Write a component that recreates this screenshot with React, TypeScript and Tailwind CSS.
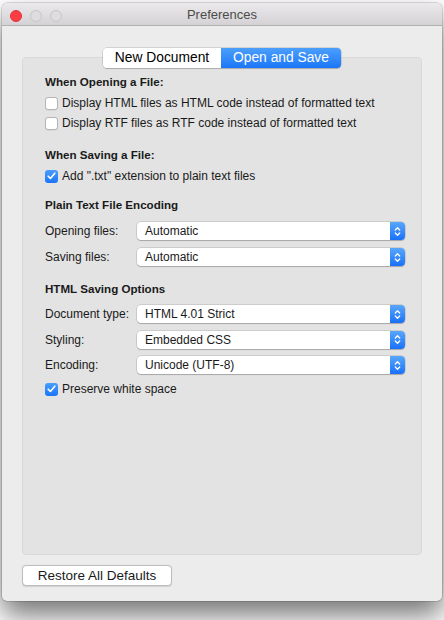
import type { ReactNode } from 'react'

const font = { fontFamily: '"Liberation Sans", Arial, sans-serif' }

function Checkbox({ checked }: { checked?: boolean }) {
  if (checked) {
    return (
      <span className="flex h-[13px] w-[13px] shrink-0 items-center justify-center rounded-[3px] bg-gradient-to-b from-[#4a9dfb] to-[#1a74f8]">
        <svg width="9" height="8" viewBox="0 0 9 8" fill="none">
          <path d="M1.2 4.2 L3.4 6.4 L7.8 1.2" stroke="white" strokeWidth="1.6" strokeLinecap="round" strokeLinejoin="round" />
        </svg>
      </span>
    )
  }
  return (
    <span className="h-[13px] w-[13px] shrink-0 rounded-[3px] border border-[#b4b4b4] bg-white shadow-[0_0.5px_0.5px_rgba(0,0,0,0.1)]" />
  )
}

function CheckRow({ checked, children }: { checked?: boolean; children: ReactNode }) {
  return (
    <div className="flex h-[20px] items-center gap-[4px]">
      <Checkbox checked={checked} />
      <span>{children}</span>
    </div>
  )
}

function Heading({ children }: { children: ReactNode }) {
  return <div className="h-[16px] text-[11.6px] font-bold leading-[16px]">{children}</div>
}

function Select({ label, value }: { label: string; value: string }) {
  return (
    <div className="flex h-[18px] items-center">
      <span className="w-[92px]">{label}</span>
      <div className="flex h-[18px] w-[268px] rounded-[4px] bg-white shadow-[0_0_0_0.5px_rgba(0,0,0,0.2),0_1px_1px_rgba(0,0,0,0.18)]">
        <span className="flex-1 pl-[8px] leading-[18px]">{value}</span>
        <span className="flex w-[15px] items-center justify-center rounded-r-[4px] bg-gradient-to-b from-[#58a6fb] to-[#1870f8]">
          <svg width="7" height="11" viewBox="0 0 7 11" fill="none">
            <path d="M1.3 4 L3.5 1.8 L5.7 4" stroke="white" strokeWidth="1.3" strokeLinecap="round" strokeLinejoin="round" />
            <path d="M1.3 7 L3.5 9.2 L5.7 7" stroke="white" strokeWidth="1.3" strokeLinecap="round" strokeLinejoin="round" />
          </svg>
        </span>
      </div>
    </div>
  )
}

export default function App() {
  return (
    <div className="h-[620px] w-[444px] overflow-hidden bg-white px-[2px] pt-[3px]" style={font}>
      <div className="flex h-[598px] flex-col overflow-hidden rounded-[5px] bg-[#ececec] text-[12px] text-[#1a1a1a] shadow-[0_14px_28px_rgba(0,0,0,0.55),0_0_0_0.5px_rgba(0,0,0,0.25)]">
        {/* title bar */}
        <div className="relative flex h-[23px] shrink-0 items-center justify-center border-b border-[#b1b1b1] bg-gradient-to-b from-[#ebe9eb] to-[#d4d2d4]">
          <div className="absolute left-[8px] top-[7px] flex gap-[8px]">
            <span className="h-[12px] w-[12px] rounded-full border border-[#e0343a] bg-[#fc3d44]" />
            <span className="h-[12px] w-[12px] rounded-full border border-[#c6c6c6] bg-[#dedcde]" />
            <span className="h-[12px] w-[12px] rounded-full border border-[#c6c6c6] bg-[#dedcde]" />
          </div>
          <span className="pt-[1px] text-[13px] text-[#4b4b4b]">Preferences</span>
        </div>

        {/* body */}
        <div className="flex flex-1 flex-col px-[20px] pt-[22px]">
          <div className="relative z-10 flex justify-center">
            <div className="flex h-[20px] overflow-hidden rounded-[4px] text-[13.8px] shadow-[0_0_0_0.5px_rgba(0,0,0,0.22),0_1px_1px_rgba(0,0,0,0.15)]">
              <span className="flex w-[118px] items-center justify-center bg-white leading-[20px] text-black">New Document</span>
              <span className="flex w-[120px] items-center justify-center bg-gradient-to-b from-[#4b9ffb] to-[#1a76f9] leading-[20px] text-white">Open and Save</span>
            </div>
          </div>

          <div className="-mt-[11px] flex h-[498px] flex-col rounded-[4px] border border-[#d9d9d9] bg-[#e3e3e3] pl-[22px] pr-[15px] pt-[16px] leading-[18px]">
            <Heading>When Opening a File:</Heading>
            <div className="mt-[3px]">
              <CheckRow>Display HTML files as HTML code instead of formatted text</CheckRow>
              <CheckRow>Display RTF files as RTF code instead of formatted text</CheckRow>
            </div>

            <div className="mt-[14px]">
              <Heading>When Saving a File:</Heading>
            </div>
            <div className="mt-[3px]">
              <CheckRow checked>Add ".txt" extension to plain text files</CheckRow>
            </div>

            <div className="mt-[11px]">
              <Heading>Plain Text File Encoding</Heading>
            </div>
            <div className="mt-[9px] flex flex-col gap-[8px]">
              <Select label="Opening files:" value="Automatic" />
              <Select label="Saving files:" value="Automatic" />
            </div>

            <div className="mt-[15px]">
              <Heading>HTML Saving Options</Heading>
            </div>
            <div className="mt-[8px] flex flex-col gap-[7.5px]">
              <Select label="Document type:" value="HTML 4.01 Strict" />
              <Select label="Styling:" value="Embedded CSS" />
              <Select label="Encoding:" value="Unicode (UTF-8)" />
            </div>
            <div className="mt-[5px]">
              <CheckRow checked>Preserve white space</CheckRow>
            </div>
          </div>

          <div className="mt-[10px]">
            <button className="h-[21px] w-[150px] rounded-[4px] border border-[#bdbdbd] bg-white text-center text-[13.5px] leading-[19px] text-[#1a1a1a] shadow-[0_0.5px_1px_rgba(0,0,0,0.12)]">
              Restore All Defaults
            </button>
          </div>
        </div>
      </div>
    </div>
  )
}
